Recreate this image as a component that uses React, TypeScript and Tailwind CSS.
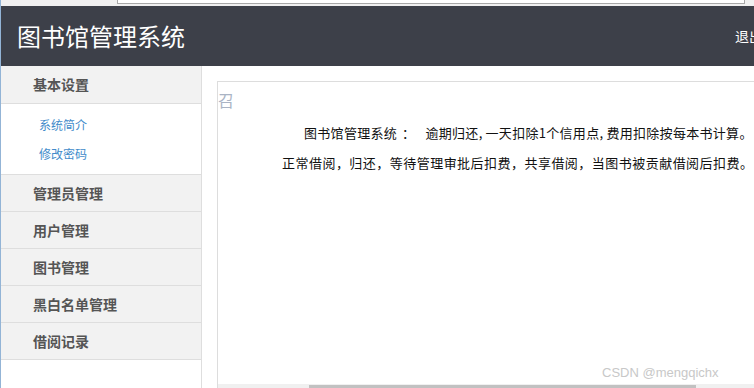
const MENU = ["管理员管理", "用户管理", "图书管理", "黑白名单管理", "借阅记录"];

export default function App() {
  return (
    <div className="relative h-[388px] w-full overflow-hidden border-l border-[#93b4d6] bg-white font-['Noto_Sans_CJK_SC','Microsoft_YaHei',sans-serif]">
      {/* browser strip */}
      <div className="flex h-[6px] bg-[#f0f0f0] pl-[116px] pr-[9px]">
        <div className="h-[4px] flex-1 border-b border-l border-r border-[#a8a8a8] bg-white" />
      </div>

      <header className="flex h-[60px] items-center justify-between overflow-hidden bg-[#3d4049] pl-[16px]">
        <h1 className="text-[24px] font-normal leading-none text-white">图书馆管理系统</h1>
        <span className="mr-[-9px] shrink-0 text-[14px] leading-none text-white">退出</span>
      </header>

      <div className="flex">
        <aside className="h-[322px] w-[201px] shrink-0 border-r border-[#dedede]">
          <div className="flex h-[38px] items-center border-b border-[#dedede] bg-[#f2f2f2] pl-[32px] text-[14px] font-bold text-[#555]">
            基本设置
          </div>
          <div className="flex h-[71px] flex-col justify-center border-b border-[#dedede] pl-[38px] text-[12px] text-[#428bca]">
            <a className="flex h-[29px] items-center">系统简介</a>
            <a className="flex h-[29px] items-center">修改密码</a>
          </div>
          {MENU.map((m) => (
            <div
              key={m}
              className="flex h-[37px] items-center border-b border-[#dedede] bg-[#f2f2f2] pl-[32px] text-[14px] font-bold text-[#555]"
            >
              {m}
            </div>
          ))}
        </aside>

        <main className="min-w-0 flex-1 overflow-hidden pl-[15px] pt-[15px]">
          <div className="flex h-[330px] w-[580px] shrink-0 flex-col border border-[#dddddd]">
            <div className="h-[302px] font-['Noto_Sans_CJK_SC','SimSun',sans-serif] text-[13px] text-[#111]">
              <div className="mt-[9px] h-[18px] text-[16px] leading-[18px] text-[#aab4c4]">召</div>
              <p className="mt-[9px] whitespace-nowrap pl-[86px] leading-[30px] tracking-[0.3px]">
                图书馆管理系统<span className="ml-[5px] mr-[10px]">：</span>逾期归还<span className="mr-[3px]">,</span>一天扣除1个信用点<span className="mr-[3px]">,</span>费用扣除按每本书计算。
              </p>
              <p className="whitespace-nowrap pl-[64px] leading-[30px] tracking-[0.47px]">
                正常借阅，归还，等待管理审批后扣费，共享借阅，当图书被贡献借阅后扣费。
              </p>
            </div>
            <div className="h-[17px] bg-[#f0f0f0] pt-[1px]">
              <div className="ml-[91px] h-full w-[387px] bg-[#c1c1c1]" />
            </div>
          </div>
        </main>
      </div>

      <div className="absolute left-[601px] top-[366px] font-['Liberation_Sans',sans-serif] text-[13px] leading-none text-[#c8c8c8]">
        CSDN @mengqichx
      </div>
    </div>
  );
}
